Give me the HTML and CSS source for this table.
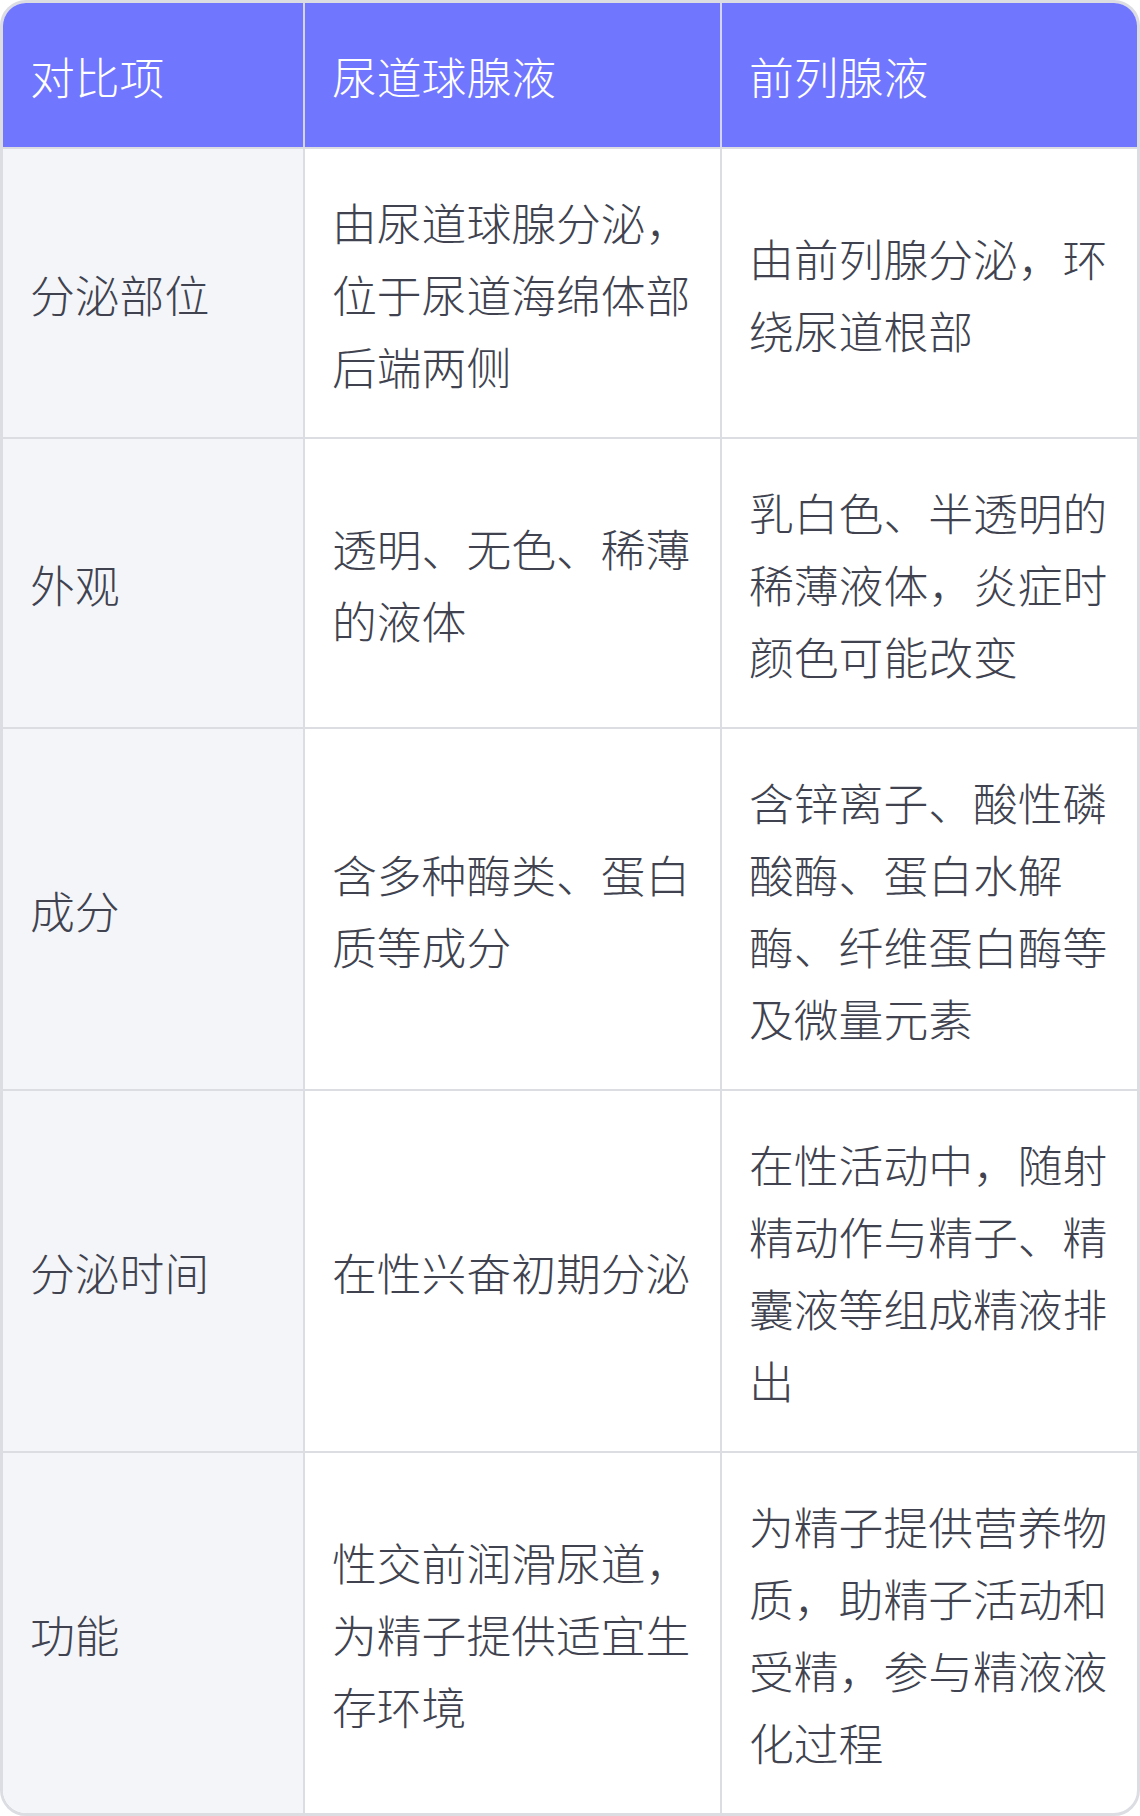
FILE: index.html
```html
<!DOCTYPE html>
<html lang="zh-CN">
<head>
<meta charset="utf-8">
<link rel="stylesheet" href="styles.css">
</head>
<body>
<div class="table">
  <div class="cell head first">对比项</div>
  <div class="cell head">尿道球腺液</div>
  <div class="cell head">前列腺液</div>

  <div class="cell label">分泌部位</div>
  <div class="cell">由尿道球腺分泌，位于尿道海绵体部后端两侧</div>
  <div class="cell">由前列腺分泌，环绕尿道根部</div>

  <div class="cell label">外观</div>
  <div class="cell">透明、无色、稀薄的液体</div>
  <div class="cell">乳白色、半透明的稀薄液体，炎症时颜色可能改变</div>

  <div class="cell label">成分</div>
  <div class="cell">含多种酶类、蛋白质等成分</div>
  <div class="cell">含锌离子、酸性磷酸酶、蛋白水解酶、纤维蛋白酶等及微量元素</div>

  <div class="cell label">分泌时间</div>
  <div class="cell">在性兴奋初期分泌</div>
  <div class="cell">在性活动中，随射精动作与精子、精囊液等组成精液排出</div>

  <div class="cell label">功能</div>
  <div class="cell">性交前润滑尿道，为精子提供适宜生存环境</div>
  <div class="cell">为精子提供营养物质，助精子活动和受精，参与精液液化过程</div>
</div>
</body>
</html>
```

FILE: styles.css
```css
html, body {
  margin: 0;
  padding: 0;
  background: #ffffff;
}

.table {
  width: 1140px;
  box-sizing: border-box;
  border: 3px solid #dcdde2;
  border-radius: 26px;
  overflow: hidden;
  display: grid;
  grid-template-columns: 300px 417px 417px;
  font-family: "Noto Sans CJK SC", "Noto Sans", sans-serif;
  font-weight: 300;
  font-size: 44.8px;
  line-height: 72px;
  color: #40434f;
  background: #ffffff;
}

.cell {
  box-sizing: border-box;
  display: flex;
  align-items: center;
  padding: 37px 27px 35px 27px;
  border-top: 2px solid #dcdde2;
  border-left: 2px solid #dcdde2;
  word-break: break-all;
}

.cell.label {
  border-left: none;
  background: #f4f5f9;
}

.cell.head {
  border-top: none;
  background: #7176ff;
  color: #ffffff;
  border-left-color: #d4d5e6;
}

.cell.head.first {
  border-left: none;
}
```
